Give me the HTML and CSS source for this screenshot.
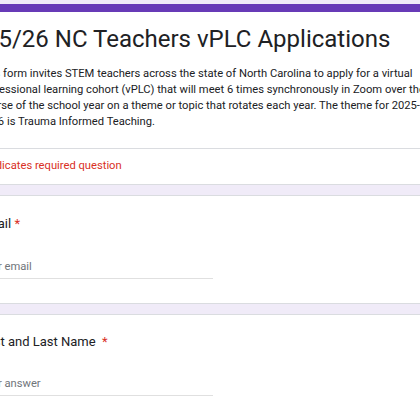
FILE: index.html
```html
<!DOCTYPE html>
<html>
<head>
<meta charset="utf-8">
<link rel="stylesheet" href="styles.css">
</head>
<body>
<div class="form">
  <div class="card header-card">
    <div class="header-main">
      <h1 class="form-title">2025/26 NC Teachers vPLC Applications</h1>
      <p class="form-desc">This form invites STEM teachers across the state of North Carolina to apply for a virtual professional learning cohort (vPLC) that will meet 6 times synchronously in Zoom over the course of the school year on a theme or topic that rotates each year. The theme for 2025-2026 is Trauma Informed Teaching.</p>
    </div>
    <div class="required-note">* Indicates required question</div>
  </div>
  <div class="card question">
    <div class="q-title">Email <span class="req">*</span></div>
    <div class="q-input">Your email</div>
  </div>
  <div class="card question">
    <div class="q-title">First and Last Name <span class="req req-wide">*</span></div>
    <div class="q-input">Your answer</div>
  </div>
</div>
</body>
</html>
```
FILE: styles.css
```css
html, body {
  margin: 0;
  padding: 0;
  background: #f0ebf8;
  overflow: hidden;
  width: 420px;
  height: 420px;
}
body {
  font-family: Roboto, "Liberation Sans", sans-serif;
  color: #202124;
}
.form {
  margin-left: -43px;
  width: 500px;
  padding-top: 4px;
  display: flex;
  flex-direction: column;
  gap: 10px;
}
.card {
  background: #fff;
  border: 1px solid #dadce0;
  border-radius: 8px;
  padding-left: 21px;
}
.header-card {
  border-top: 8px solid #673ab7;
}
.header-main {
  padding: 10px 0 18px;
  border-bottom: 1px solid #dadce0;
  margin-left: -21px;
  padding-left: 21px;
}
.form-title {
  margin: 0;
  font-family: Roboto, "Open Sans", sans-serif;
  font-weight: 400;
  font-size: 24px;
  line-height: 34px;
  text-indent: -21px;
  white-space: nowrap;
}
.form-desc {
  margin: 10px 0 0;
  width: 448px;
  font-size: 11.2px;
  line-height: 16px;
}
.required-note {
  color: #d93025;
  font-size: 11.2px;
  padding: 10px 0 12px;
}
.question {
  padding-top: 19px;
  padding-bottom: 24px;
}
.q-title {
  font-size: 13px;
  line-height: 18px;
}
.req {
  color: #d93025;
}
.req-wide {
  margin-left: 3px;
}
.q-input {
  margin-top: 26px;
  width: 234px;
  font-size: 11.2px;
  line-height: 16px;
  color: #70757a;
  padding-bottom: 3px;
  border-bottom: 1px solid #e0e0e0;
}
.question + .question .q-title {
  margin-top: -1px;
}
.question + .question .q-input {
  margin-top: 25px;
}
```
